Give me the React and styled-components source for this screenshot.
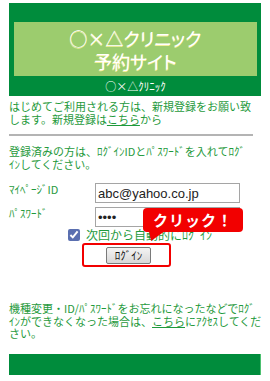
import React from 'react';
import styled, { createGlobalStyle } from 'styled-components';

const Global = createGlobalStyle`
  body {
    margin: 0;
    background: #ffffff;
    font-family: "Noto Sans CJK JP", "Liberation Sans", sans-serif;
  }
`;

function App() {
  return (
    <Page>
      <Global />
      <Header>
        <div className="title-box">
          <h1>○×△クリニック<br />予約サイト</h1>
        </div>
        <div className="sub">○×△ｸﾘﾆｯｸ</div>
      </Header>

      <Text>
        はじめてご利用される方は、新規登録をお願い致<br />
        します。新規登録は<a href="#">こちら</a>から
      </Text>
      <Rule />
      <Text>
        登録済みの方は、ﾛｸﾞｲﾝIDとﾊﾟｽﾜｰﾄﾞを入れてﾛｸﾞ<br />
        ｲﾝしてください。
      </Text>

      <Form>
        <FieldRow>
          <label>ﾏｲﾍﾟｰｼﾞID</label>
          <Input type="text" defaultValue="abc@yahoo.co.jp" />
        </FieldRow>
        <FieldRow $gap={4}>
          <label>ﾊﾟｽﾜｰﾄﾞ</label>
          <Input type="password" defaultValue="abcd" />
          <Callout>クリック！</Callout>
        </FieldRow>
        <Remember>
          <input type="checkbox" defaultChecked />
          <span>次回から自動的にﾛｸﾞｲﾝ</span>
        </Remember>
        <ButtonFrame>
          <LoginButton type="button">ﾛｸﾞｲﾝ</LoginButton>
        </ButtonFrame>
      </Form>

      <Text $top={35}>
        機種変更・ID/ﾊﾟｽﾜｰﾄﾞをお忘れになったなどでﾛｸﾞ<br />
        ｲﾝができなくなった場合は、<a href="#">こちら</a>にｱｸｾｽしてくだ<br />
        さい。
      </Text>
      <FooterBar />
    </Page>
  );
}

export default App;

const Page = styled.div`
  width: 252px;
  padding: 3px 9px 0;
  color: #1f9a3c;
`;

const Header = styled.header`
  background: #008c3c;
  padding: 19px 4px 0 5px;
  height: 93px;
  box-sizing: border-box;

  .title-box {
    background: #9ccc6e;
    height: 54px;
    display: flex;
    align-items: center;
    justify-content: center;
  }
  h1 {
    margin: 2px 0 0;
    font-size: 18px;
    line-height: 23px;
    font-weight: 400;
    font-feature-settings: "palt";
    color: #ffffff;
    text-align: center;
    text-shadow: -0.6px 0.6px 0 #f2ee9a;
  }
  .sub {
    color: #ffffff;
    font-size: 11px;
    line-height: 20px;
    text-align: center;
  }
`;

const Text = styled.p`
  margin: ${(p) => p.$top || 4}px 0 0;
  font-size: 11px;
  line-height: 12.5px;
  color: #1f9a3c;
  white-space: nowrap;

  a {
    color: #1f9a3c;
    text-decoration: underline;
  }
`;

const Rule = styled.hr`
  margin: 9px 0 9px;
  border: none;
  height: 2px;
  width: 244px;
  background: #b4b4b4;
`;

const Form = styled.div`
  margin-top: 13px;
  display: flex;
  flex-direction: column;
`;

const FieldRow = styled.div`
  position: relative;
  display: flex;
  align-items: flex-start;
  margin-top: ${(p) => p.$gap || 0}px;

  label {
    width: 86px;
    font-size: 11px;
    line-height: 12px;
    color: #1f9a3c;
  }
`;

const Input = styled.input`
  width: 145px;
  height: 20px;
  box-sizing: border-box;
  border: 1px solid #a5a5a5;
  padding: 0 2px;
  font-family: "Liberation Sans", sans-serif;
  font-size: 13px;
  color: #222;
  outline: none;
`;

const Callout = styled.div`
  position: absolute;
  left: 134px;
  top: 1px;
  width: 100px;
  height: 24px;
  background: #f20000;
  border-radius: 4px;
  color: #fff;
  font-weight: 700;
  font-size: 15px;
  line-height: 24px;
  text-align: center;
  letter-spacing: 1px;

  &::after {
    content: '';
    position: absolute;
    left: 6px;
    bottom: -9px;
    border-left: 2px solid transparent;
    border-right: 14px solid transparent;
    border-top: 10px solid #f20000;
  }
`;

const Remember = styled.label`
  display: flex;
  align-items: center;
  margin: 1px 0 0 57px;
  font-size: 12px;
  line-height: 14px;
  color: #1f9a3c;

  input {
    width: 12px;
    height: 12px;
    margin: 0 6px 0 2px;
    accent-color: #5a6fb0;
  }
`;

const ButtonFrame = styled.div`
  margin: 1px 0 0 73px;
  width: 63px;
  height: 20px;
  border: 2px solid #f20000;
  border-radius: 3px;
  display: flex;
  align-items: center;
  padding-left: 22px;
`;

const LoginButton = styled.button`
  width: 45px;
  height: 17px;
  flex: none;
  padding: 0;
  border: 1px solid #7a7a7a;
  border-radius: 2px;
  background: linear-gradient(#f4f4f4, #d8d8d8);
  font-family: "Noto Sans CJK JP", sans-serif;
  font-size: 11px;
  line-height: 15px;
  color: #111;
`;

const FooterBar = styled.div`
  margin-top: 14px;
  height: 21px;
  background: #008c3c;
  border-right: 1px solid #4cc070;
`;
